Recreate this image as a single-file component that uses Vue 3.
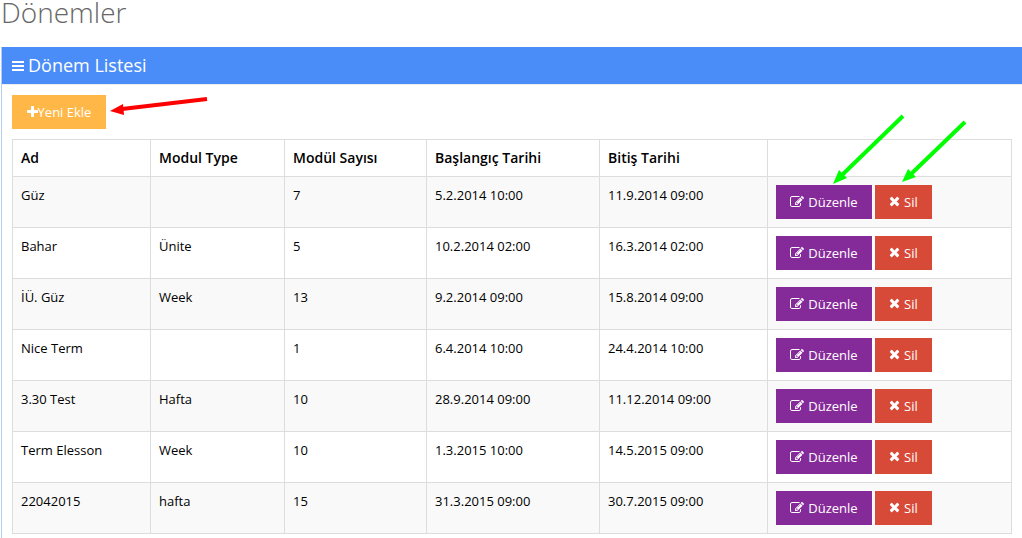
<script setup>
const rows = [
  { name: 'Güz', type: '', count: 7, start: '5.2.2014 10:00', end: '11.9.2014 09:00' },
  { name: 'Bahar', type: 'Ünite', count: 5, start: '10.2.2014 02:00', end: '16.3.2014 02:00' },
  { name: 'İÜ. Güz', type: 'Week', count: 13, start: '9.2.2014 09:00', end: '15.8.2014 09:00' },
  { name: 'Nice Term', type: '', count: 1, start: '6.4.2014 10:00', end: '24.4.2014 10:00' },
  { name: '3.30 Test', type: 'Hafta', count: 10, start: '28.9.2014 09:00', end: '11.12.2014 09:00' },
  { name: 'Term Elesson', type: 'Week', count: 10, start: '1.3.2015 10:00', end: '14.5.2015 09:00' },
  { name: '22042015', type: 'hafta', count: 15, start: '31.3.2015 09:00', end: '30.7.2015 09:00' },
]
</script>

<template>
  <main class="page">
    <h1 class="title">Dönemler</h1>
    <section class="panel">
      <header class="panel-head">
        <svg class="bars" viewBox="0 0 12 12" aria-hidden="true">
          <path d="M0 2h12v2H0zM0 6h12v2H0zM0 10h12v2H0z" />
        </svg>
        <h2>Dönem Listesi</h2>
      </header>
      <div class="panel-body">
        <button type="button" class="btn add">
          <svg class="icon" viewBox="192 128 1408 1536" aria-hidden="true">
            <path d="M1600 736v192q0 40-28 68t-68 28h-416v416q0 40-28 68t-68 28h-192q-40 0-68-28t-28-68v-416h-416q-40 0-68-28t-28-68v-192q0-40 28-68t68-28h416v-416q0-40 28-68t68-28h192q40 0 68 28t28 68v416h416q40 0 68 28t28 68z" />
          </svg>Yeni Ekle
        </button>
        <table>
          <colgroup>
            <col class="c-name" /><col class="c-type" /><col class="c-count" />
            <col class="c-start" /><col class="c-end" /><col />
          </colgroup>
          <thead>
            <tr>
              <th scope="col">Ad</th>
              <th scope="col">Modul Type</th>
              <th scope="col">Modül Sayısı</th>
              <th scope="col">Başlangıç Tarihi</th>
              <th scope="col">Bitiş Tarihi</th>
              <td></td>
            </tr>
          </thead>
          <tbody>
            <tr v-for="row in rows" :key="row.name">
              <td>{{ row.name }}</td>
              <td>{{ row.type }}</td>
              <td>{{ row.count }}</td>
              <td>{{ row.start }}</td>
              <td>{{ row.end }}</td>
              <td>
                <div class="actions">
                  <button type="button" class="btn edit">
                    <svg class="icon wide" viewBox="0 0 1792 1792" aria-hidden="true">
                      <path d="M888 1184l116-116-152-152-116 116v56h96v96h56zm440-720q-16-16-33 1l-350 350q-17 17-1 33t33-1l350-350q17-17 1-33zm80 594v190q0 119-84.5 203.5t-203.5 84.5h-832q-119 0-203.5-84.5t-84.5-203.5v-832q0-119 84.5-203.5t203.5-84.5h832q63 0 117 25 15 7 18 23 3 17-9 29l-49 49q-14 14-32 8-23-6-45-6h-832q-66 0-113 47t-47 113v832q0 66 47 113t113 47h832q66 0 113-47t47-113v-126q0-13 9-22l64-64q15-15 35-7t20 29zm-96-738l288 288-672 672h-288v-288zm444 132l-92 92-288-288 92-92q28-28 68-28t68 28l152 152q28 28 28 68t-28 68z" />
                    </svg>
                    <span>Düzenle</span>
                  </button>
                  <button type="button" class="btn delete">
                    <svg class="icon" viewBox="192 256 1408 1536" aria-hidden="true">
                      <path d="M1490 1322q0 40-28 68l-136 136q-28 28-68 28t-68-28l-294-294-294 294q-28 28-68 28t-68-28l-136-136q-28-28-28-68t28-68l294-294-294-294q-28-28-28-68t28-68l136-136q28-28 68-28t68 28l294 294 294-294q28-28 68-28t68 28l136 136q28 28 28 68t-28 68l-294 294 294 294q28 28 28 68z" />
                    </svg>
                    <span>Sil</span>
                  </button>
                </div>
              </td>
            </tr>
          </tbody>
        </table>
      </div>
    </section>

    <svg class="arrow arrow-add" viewBox="0 0 98 20" aria-hidden="true">
      <path d="M97 2L12 12" /><polygon points="0,14 13,7 14,18" />
    </svg>
    <svg class="arrow arrow-edit" viewBox="0 0 74 72" aria-hidden="true">
      <path d="M70 3L9 62" /><polygon points="0,71 6,57 10,61 14,65" />
    </svg>
    <svg class="arrow arrow-delete" viewBox="0 0 68 66" aria-hidden="true">
      <path d="M64 3L9 56" /><polygon points="1,63 7,50 15,58" />
    </svg>
  </main>
</template>

<style>
body {
  margin: 0;
  background: #fff;
}
</style>

<style scoped>
.page {
  position: relative;
  min-height: 100vh;
  display: flex;
  flex-direction: column;
  color: #000;
  font-family: "Open Sans", "Noto Sans", sans-serif;
  font-size: 13px;
  line-height: 20px;
}
.title {
  flex: none;
  margin: 0 0 23px 1px;
  color: #666;
  font-size: 28px;
  font-weight: 300;
  line-height: 24px;
}
.panel {
  flex: 1 0 auto;
  margin-left: 1px;
  border-left: 1px solid #b4cef8;
}
.panel-head {
  display: flex;
  align-items: center;
  gap: 4px;
  padding: 6px 10px 7px;
  background: #4b8df8;
  border-bottom: 1px solid #eee;
  color: #fff;
}
.panel-head h2 {
  margin: 0;
  font-size: 18px;
  font-weight: 400;
  line-height: 24px;
}
.bars {
  width: 12px;
  height: 12px;
  fill: currentColor;
}
.panel-body {
  padding: 10px 10px 0;
}
.btn {
  display: inline-flex;
  align-items: center;
  justify-content: center;
  height: 34px;
  padding: 0 14px;
  border: 0;
  color: #fff;
  font-family: inherit;
  font-size: 13px;
  line-height: 20px;
  white-space: nowrap;
  cursor: pointer;
}
.icon {
  flex: none;
  width: 11px;
  height: 12px;
  fill: currentColor;
}
.icon.wide {
  width: 14px;
  height: 14px;
}
.add {
  min-width: 94px;
  margin-bottom: 10px;
  background: #ffb848;
}
.actions {
  display: flex;
  gap: 3px;
}
.actions .btn {
  gap: 4px;
}
.edit {
  min-width: 96px;
  background: #852b99;
}
.delete {
  background: #d84a38;
}
table {
  width: 100%;
  table-layout: fixed;
  border-collapse: collapse;
}
.c-name {
  width: 138px;
}
.c-type {
  width: 134px;
}
.c-count {
  width: 142px;
}
.c-start {
  width: 173px;
}
.c-end {
  width: 168px;
}
th,
td {
  padding: 8px;
  border: 1px solid #ddd;
  text-align: left;
  vertical-align: top;
}
th {
  font-size: 14px;
  font-weight: 600;
}
tbody tr:nth-child(odd) {
  background: #f9f9f9;
}
.arrow {
  position: absolute;
  fill: #0f0;
  stroke: #0f0;
  stroke-width: 0;
}
.arrow path {
  stroke-width: 4;
}
.arrow-add {
  left: 110px;
  top: 97px;
  width: 98px;
  height: 20px;
  fill: #f00;
  stroke: #f00;
}
.arrow-edit {
  left: 833px;
  top: 113px;
  width: 74px;
  height: 72px;
}
.arrow-delete {
  left: 901px;
  top: 119px;
  width: 68px;
  height: 66px;
}
</style>
